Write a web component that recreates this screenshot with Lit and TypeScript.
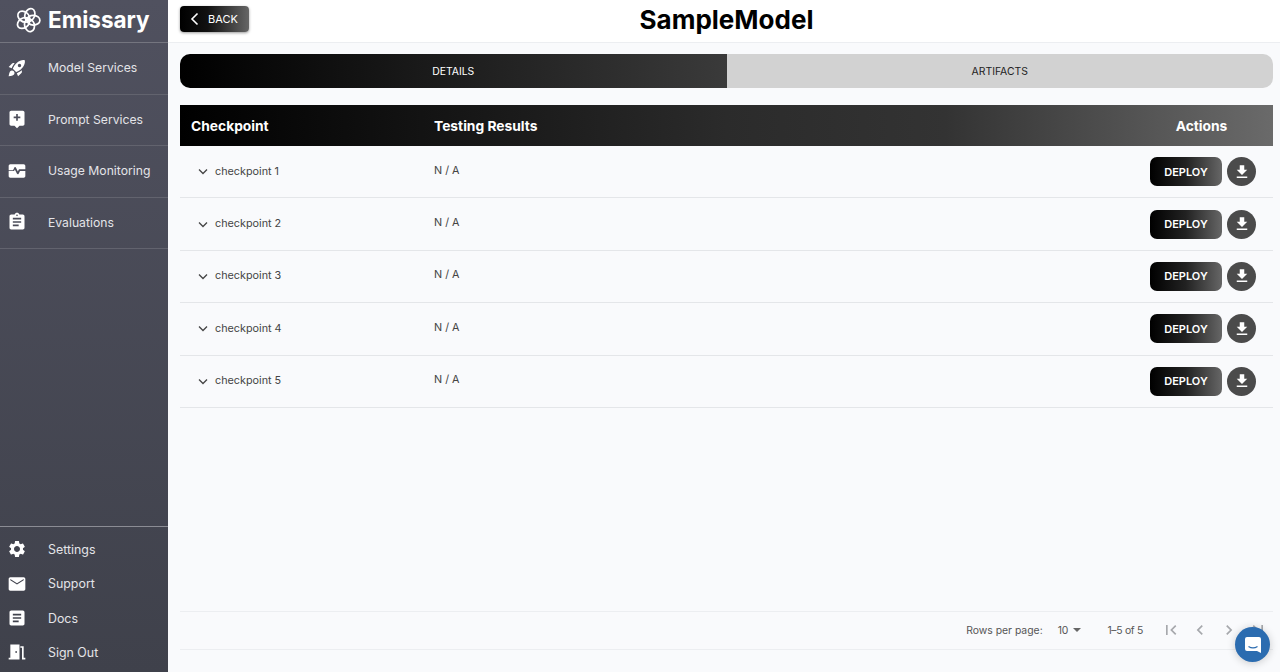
import { LitElement, html, css, svg } from "lit";
import { customElement } from "lit/decorators.js";

const icon = (d: string, size = 20) =>
  html`<svg width=${size} height=${size} viewBox="0 0 24 24" fill="currentColor">${svg`<path d=${d}></path>`}</svg>`;

const ICONS = {
  rocket:
    "M9.19 6.35c-2.04 2.29-3.44 5.58-3.57 5.89L2 10.69l4.05-4.05c.47-.47 1.15-.68 1.81-.55l1.33.26zM11.17 17s3.74-1.55 5.89-3.7c5.4-5.4 4.5-9.62 4.21-10.57-.95-.3-5.17-1.19-10.57 4.21C8.55 9.09 7 12.83 7 12.83L11.17 17zm6.48-2.19c-2.29 2.04-5.58 3.44-5.89 3.57L13.31 22l4.05-4.05c.47-.47.68-1.15.55-1.81l-.26-1.33zM9 18c0 .83-.34 1.58-.88 2.12C6.94 21.3 2 22 2 22s.7-4.94 1.88-6.12C4.42 15.34 5.17 15 6 15c1.66 0 3 1.34 3 3zm4-9c0-1.1.9-2 2-2s2 .9 2 2-.9 2-2 2-2-.9-2-2z",
  prompt:
    "M19 2H5c-1.1 0-2 .9-2 2v14c0 1.1.9 2 2 2h4l3 3 3-3h4c1.1 0 2-.9 2-2V4c0-1.1-.9-2-2-2zm-6 9v3h-2v-3H8V9h3V6h2v3h3v2h-3z",
  monitor:
    "M20 4H4c-1.1 0-2 .9-2 2v5h5.2l1.7-3.2c.2-.3.5-.5.9-.5s.7.2.9.6l2.3 4.7.9-1.9c.2-.4.5-.7.9-.7H22V6c0-1.1-.9-2-2-2zm-5.1 9.4-1.1 2.1c-.2.3-.5.5-.9.5s-.7-.2-.9-.6l-2.6-5.1-.5 1.1c-.2.4-.5.6-.9.6H2v6c0 1.1.9 2 2 2h16c1.1 0 2-.9 2-2v-6h-6.4l-.7 1.4z",
  clipboard:
    "M19 3h-4.18C14.4 1.84 13.3 1 12 1s-2.4.84-2.82 2H5c-1.1 0-2 .9-2 2v14c0 1.1.9 2 2 2h14c1.1 0 2-.9 2-2V5c0-1.1-.9-2-2-2zm-7 0c.55 0 1 .45 1 1s-.45 1-1 1-1-.45-1-1 .45-1 1-1zm2 14H7v-2h7v2zm3-4H7v-2h10v2zm0-4H7V7h10v2z",
  settings:
    "M19.14 12.94c.04-.3.06-.61.06-.94 0-.32-.02-.64-.07-.94l2.03-1.58c.18-.14.23-.41.12-.61l-1.92-3.32c-.12-.22-.37-.29-.59-.22l-2.39.96c-.5-.38-1.03-.7-1.62-.94l-.36-2.54c-.04-.24-.24-.41-.48-.41h-3.84c-.24 0-.43.17-.47.41l-.36 2.54c-.59.24-1.13.57-1.62.94l-2.39-.96c-.22-.08-.47 0-.59.22L2.74 8.87c-.12.21-.08.47.12.61l2.03 1.58c-.05.3-.09.63-.09.94s.02.64.07.94l-2.03 1.58c-.18.14-.23.41-.12.61l1.92 3.32c.12.22.37.29.59.22l2.39-.96c.5.38 1.03.7 1.62.94l.36 2.54c.05.24.24.41.48.41h3.84c.24 0 .44-.17.47-.41l.36-2.54c.59-.24 1.13-.56 1.62-.94l2.39.96c.22.08.47 0 .59-.22l1.92-3.32c.12-.22.07-.47-.12-.61l-2.01-1.58zM12 15.6c-1.98 0-3.6-1.62-3.6-3.6s1.62-3.6 3.6-3.6 3.6 1.62 3.6 3.6-1.62 3.6-3.6 3.6z",
  mail:
    "M20 4H4c-1.1 0-2 .9-2 2v12c0 1.1.9 2 2 2h16c1.1 0 2-.9 2-2V6c0-1.1-.9-2-2-2zm0 3.5-8 5-8-5V6l8 5 8-5v1.5z",
  docs:
    "M19 3H5c-1.1 0-2 .9-2 2v14c0 1.1.9 2 2 2h14c1.1 0 2-.9 2-2V5c0-1.1-.9-2-2-2zm-5 14H7v-2h7v2zm3-4H7v-2h10v2zm0-4H7V7h10v2z",
  door:
    "M4 21V3h11v18H4zm6-10v2h2v-2h-2zM16 5h4v14h2v2h-4V7h-2V5zM2 19h2v2H2z",
  download: "M19 9h-4V3H9v6H5l7 7 7-7zM5 18v2h14v-2H5z",
};

const MAIN_NAV = [
  { label: "Model Services", icon: ICONS.rocket },
  { label: "Prompt Services", icon: ICONS.prompt },
  { label: "Usage Monitoring", icon: ICONS.monitor },
  { label: "Evaluations", icon: ICONS.clipboard },
];

const BOTTOM_NAV = [
  { label: "Settings", icon: ICONS.settings },
  { label: "Support", icon: ICONS.mail },
  { label: "Docs", icon: ICONS.docs },
  { label: "Sign Out", icon: ICONS.door },
];

const CHECKPOINTS = ["checkpoint 1", "checkpoint 2", "checkpoint 3", "checkpoint 4", "checkpoint 5"];

@customElement("app-root")
export class AppRoot extends LitElement {
  static styles = css`
    :host {
      display: flex;
      width: 1280px;
      height: 672px;
      overflow: hidden;
      position: relative;
      font-family: Inter, "Liberation Sans", sans-serif;
      background: #f9fafc;
      color: #444;
    }

    .sidebar {
      width: 168px;
      flex: none;
      display: flex;
      flex-direction: column;
      color: #fff;
      background: linear-gradient(180deg, #50515f 0%, #3f414b 100%);
    }

    .brand {
      height: 43px;
      box-sizing: border-box;
      display: flex;
      align-items: center;
      gap: 7px;
      padding: 0 0 3px 15px;
      border-bottom: 1px solid #74757f;
      font-size: 22.5px;
      font-weight: 700;
    }

    .nav-item {
      height: 51.5px;
      box-sizing: border-box;
      padding-bottom: 1px;
      display: flex;
      align-items: center;
      border-bottom: 1px solid #62636e;
      font-size: 12.2px;
      color: #e4e4e8;
    }

    .nav-item svg,
    .bottom-item svg {
      margin-left: 7px;
      color: #fff;
      flex: none;
    }

    .nav-item span,
    .bottom-item span {
      margin-left: 21px;
    }

    .spacer {
      flex: 1;
    }

    .bottom {
      border-top: 1px solid #8b8c94;
      padding: 5.5px 0 2.5px;
    }

    .bottom-item {
      height: 34.3px;
      display: flex;
      align-items: center;
      font-size: 12.4px;
      color: #e4e4e8;
    }

    .main {
      flex: 1;
      min-width: 0;
      display: flex;
      flex-direction: column;
    }

    .topbar {
      height: 43px;
      box-sizing: border-box;
      flex: none;
      display: grid;
      grid-template-columns: 1fr auto 1fr;
      align-items: center;
      padding: 0 7px 4px 12px;
      background: #fff;
      border-bottom: 1px solid #eceef1;
    }

    .back {
      justify-self: start;
      width: 69px;
      height: 26px;
      display: flex;
      align-items: center;
      gap: 7px;
      padding-left: 9px;
      box-sizing: border-box;
      border-radius: 4px;
      color: #fff;
      font-size: 11px;
      background: linear-gradient(90deg, #000 0%, #111 40%, #666 100%);
      box-shadow: 0 1px 3px rgba(0, 0, 0, 0.4);
    }

    h1 {
      margin: 2px 0 0;
      color: #000;
      font-size: 26px;
      line-height: 30px;
      font-weight: 700;
    }

    .content {
      flex: 1;
      padding: 11px 7px 0 12px;
      display: flex;
      flex-direction: column;
    }

    .tabs {
      display: flex;
      height: 34px;
      border-radius: 10px;
      overflow: hidden;
      font-size: 10.4px;
    }

    .tab {
      flex: 1;
      display: flex;
      align-items: center;
      justify-content: center;
      color: #222;
      background: #d2d2d2;
    }

    .tab.active {
      color: #fff;
      background: linear-gradient(90deg, #000 0%, #3a3a3a 100%);
    }

    .table-head {
      margin-top: 17px;
      height: 41px;
      display: grid;
      grid-template-columns: 254px 1fr 141px;
      align-items: center;
      color: #fff;
      font-size: 13.8px;
      font-weight: 700;
      background: linear-gradient(90deg, #000 0%, #2b2b2b 50%, #333 70%, #6a6a6a 100%);
    }

    .table-head div:first-child {
      padding-left: 11px;
    }

    .table-head div:last-child {
      text-align: center;
      padding-right: 2px;
    }

    .row {
      height: 52.4px;
      box-sizing: border-box;
      display: grid;
      grid-template-columns: 254px 1fr 141px;
      align-items: center;
      border-bottom: 1px solid #e4e6e9;
      font-size: 10.8px;
    }

    .name {
      display: flex;
      align-items: center;
      gap: 6px;
      padding-left: 17px;
      margin-top: -1px;
    }

    .results {
      margin-top: -3px;
    }

    .actions {
      display: flex;
      align-items: center;
      gap: 5px;
      margin-left: 18px;
    }

    .deploy {
      width: 72px;
      height: 29px;
      display: flex;
      align-items: center;
      justify-content: center;
      border-radius: 7px;
      color: #fff;
      font-size: 11px;
      font-weight: 600;
      background: linear-gradient(90deg, #000 0%, #222 50%, #666 100%);
    }

    .download {
      width: 29px;
      height: 29px;
      display: flex;
      align-items: center;
      justify-content: center;
      border-radius: 50%;
      color: #fff;
      background: #4b4b4b;
    }

    .pager {
      margin-top: auto;
      margin-bottom: 22px;
      height: 37px;
      box-sizing: content-box;
      display: flex;
      align-items: center;
      justify-content: flex-end;
      border-top: 1px solid #eceef1;
      border-bottom: 1px solid #eceef1;
      font-size: 10.4px;
      color: #555;
    }

    .pager > * {
      margin-top: -1px;
    }

    .per-page {
      display: flex;
      align-items: center;
      margin-left: 15px;
      gap: 3px;
    }

    .caret {
      width: 0;
      height: 0;
      border-left: 4px solid transparent;
      border-right: 4px solid transparent;
      border-top: 4px solid #666;
      margin-left: 2px;
    }

    .range {
      margin-left: 26px;
      letter-spacing: -0.3px;
    }

    .pager-icons {
      display: flex;
      align-items: center;
      gap: 9px;
      margin-left: 18px;
      color: #a6a8ac;
      width: 112px;
    }

    .chat {
      position: absolute;
      right: 10px;
      bottom: 10px;
      width: 35px;
      height: 35px;
      border-radius: 50%;
      display: flex;
      align-items: center;
      justify-content: center;
      background: #2b6cb0;
      box-shadow: 0 1px 8px rgba(0, 0, 0, 0.2);
    }
  `;

  render() {
    return html`
      <aside class="sidebar">
        <div class="brand">
          <svg width="26" height="26" viewBox="0 0 24 24" fill="none" stroke="#fff" stroke-width="1.6">
            <ellipse cx="12" cy="7" rx="4.5" ry="6" transform="rotate(20 12 12)"></ellipse>
            <ellipse cx="12" cy="7" rx="4.5" ry="6" transform="rotate(92 12 12)"></ellipse>
            <ellipse cx="12" cy="7" rx="4.5" ry="6" transform="rotate(164 12 12)"></ellipse>
            <ellipse cx="12" cy="7" rx="4.5" ry="6" transform="rotate(236 12 12)"></ellipse>
            <ellipse cx="12" cy="7" rx="4.5" ry="6" transform="rotate(308 12 12)"></ellipse>
            <circle cx="12" cy="12" r="1.4" fill="#fff" stroke="none"></circle>
          </svg>
          <span>Emissary</span>
        </div>
        ${MAIN_NAV.map(
          (n) => html`<div class="nav-item">${icon(n.icon)}<span>${n.label}</span></div>`
        )}
        <div class="spacer"></div>
        <div class="bottom">
          ${BOTTOM_NAV.map(
            (n) => html`<div class="bottom-item">${icon(n.icon)}<span>${n.label}</span></div>`
          )}
        </div>
      </aside>
      <div class="main">
        <header class="topbar">
          <div class="back">
            <svg width="12" height="14" viewBox="0 0 12 14" fill="none" stroke="#fff" stroke-width="1.6">
              <path d="M8.5 1.5 3 7l5.5 5.5"></path>
            </svg>
            BACK
          </div>
          <h1>SampleModel</h1>
        </header>
        <div class="content">
          <div class="tabs">
            <div class="tab active">DETAILS</div>
            <div class="tab">ARTIFACTS</div>
          </div>
          <div class="table-head">
            <div>Checkpoint</div>
            <div>Testing Results</div>
            <div>Actions</div>
          </div>
          ${CHECKPOINTS.map(
            (c) => html`
              <div class="row">
                <div class="name">
                  <svg width="12" height="12" viewBox="0 0 12 12" fill="none" stroke="#444" stroke-width="1.3">
                    <path d="M2 4.5 6 8.5l4-4"></path>
                  </svg>
                  ${c}
                </div>
                <div class="results">N / A</div>
                <div class="actions">
                  <div class="deploy">DEPLOY</div>
                  <div class="download">${icon(ICONS.download, 18)}</div>
                </div>
              </div>
            `
          )}
          <div class="pager">
            <span>Rows per page:</span>
            <span class="per-page">10 <span class="caret"></span></span>
            <span class="range">1–5 of 5</span>
            <div class="pager-icons">
              ${icon("M18.41 16.59 13.82 12l4.59-4.59L17 6l-6 6 6 6zM6 6h2v12H6z", 20)}
              ${icon("M15.41 7.41 14 6l-6 6 6 6 1.41-1.41L10.83 12z", 20)}
              ${icon("M10 6 8.59 7.41 13.17 12l-4.58 4.59L10 18l6-6z", 20)}
              ${icon("M5.59 7.41 10.18 12l-4.59 4.59L7 18l6-6-6-6zM16 6h2v12h-2z", 20)}
            </div>
          </div>
        </div>
      </div>
      <div class="chat">
        <svg width="20" height="20" viewBox="0 0 20 20">
          <path d="M4 2h12a2 2 0 0 1 2 2v14l-4-2H4a2 2 0 0 1-2-2V4a2 2 0 0 1 2-2z" fill="#fff"></path>
          <path d="M5.5 11.5c2.5 1.6 6.5 1.6 9 0" fill="none" stroke="#2b6cb0" stroke-width="1.2"></path>
        </svg>
      </div>
    `;
  }
}
